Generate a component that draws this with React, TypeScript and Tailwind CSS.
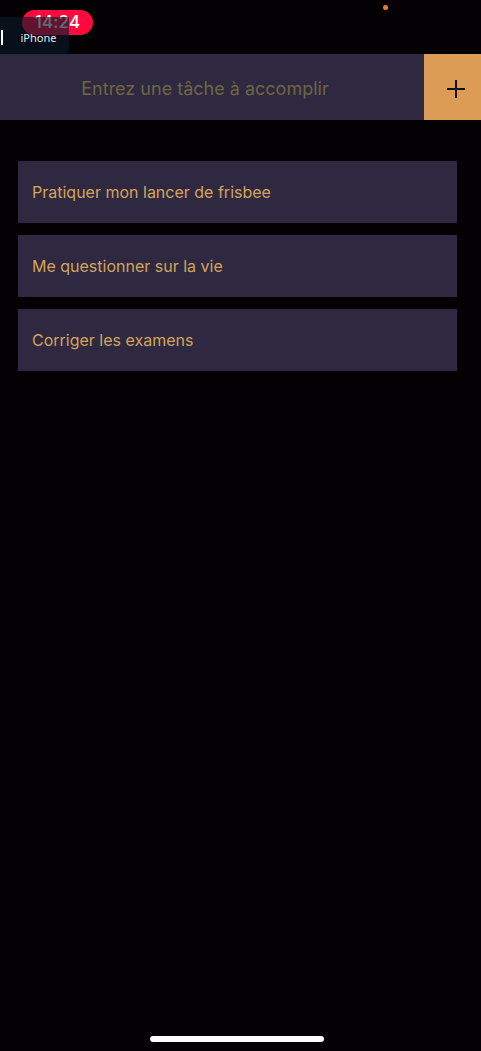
import React from "react";

const tasks = [
  "Pratiquer mon lancer de frisbee",
  "Me questionner sur la vie",
  "Corriger les examens",
];

export default function App() {
  return (
    <div
      className="relative w-[481px] h-[1051px] bg-[#030103] overflow-hidden"
      style={{ fontFamily: "Inter, 'Noto Sans', sans-serif" }}
    >
      {/* status bar */}
      <div className="relative h-[54px]">
        <div className="absolute left-[22px] top-[10px] w-[71px] h-[25px] rounded-full bg-[#ff0a3e] flex items-center justify-center">
          <span className="text-[17px] font-medium text-white leading-none tracking-[0.2px]">14:24</span>
        </div>
        <div className="absolute left-[383px] top-[5px] w-[5px] h-[5px] rounded-full bg-[#f37b1d]" />
        {/* iPhone overlay */}
        <div className="absolute left-0 top-[17px] w-[69px] h-[37px] rounded-br-[4px] bg-[#0a1a28]/65 flex items-center">
          <div className="ml-[1px] w-[1.5px] h-[15px] bg-white mt-[4px]" />
          <span className="ml-[18px] mt-[4px] text-[11px] text-[#e8e8ee] leading-none" style={{ fontFamily: "'Noto Sans', sans-serif" }}>iPhone</span>
        </div>
      </div>

      {/* input row */}
      <div className="flex h-[66px]">
        <div className="flex-1 bg-[#2e2840] flex items-center justify-center">
          <span className="text-[18px] text-[#6f6540] pr-[14px] pt-[2px]">Entrez une tâche à accomplir</span>
        </div>
        <div className="w-[57px] bg-[#dc9c55] flex items-center justify-center">
          <svg width="20" height="20" viewBox="0 0 20 20" className="mt-[4px] ml-[6px]">
            <path d="M10 1v18M1 10h18" stroke="#111" strokeWidth="2" />
          </svg>
        </div>
      </div>

      {/* tasks */}
      <div className="flex flex-col gap-[12px] px-[18px] pt-[41px] pr-[24px]">
        {tasks.map((t) => (
          <div key={t} className="h-[62px] bg-[#2e2840] flex items-center pl-[14px]">
            <span className="text-[16px] text-[#d4a45c]">{t}</span>
          </div>
        ))}
      </div>

      {/* home indicator */}
      <div className="absolute left-[150px] top-[1036px] w-[174px] h-[6px] rounded-full bg-white" />
    </div>
  );
}
